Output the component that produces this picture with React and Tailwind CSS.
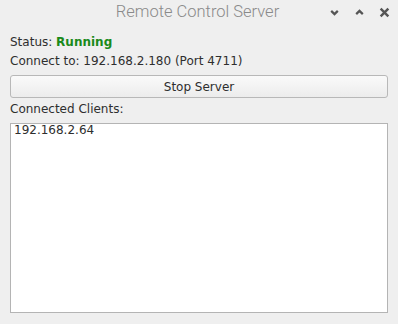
import React from "react";

export default function App() {
  return (
    <div className="w-[398px] h-[324px] bg-[#efefef] flex flex-col overflow-hidden">
      <div className="h-[26px] relative flex items-center justify-center shrink-0">
        <span className="text-[16.5px] font-light text-[#8a8a8a] font-['Roboto',sans-serif] leading-none mt-[-1px] ml-[-3px]">Remote Control Server</span>
        <div className="absolute right-[8px] top-[7px] flex items-center gap-[14px]">
          <svg width="11" height="11" viewBox="0 0 10 10"><path d="M2 3.5 L5 6.5 L8 3.5" stroke="#555" strokeWidth="2" fill="none" /></svg>
          <svg width="11" height="11" viewBox="0 0 10 10"><path d="M2 6.5 L5 3.5 L8 6.5" stroke="#555" strokeWidth="2" fill="none" /></svg>
          <svg width="11" height="11" viewBox="0 0 10 10"><path d="M1.5 1.5 L8.5 8.5 M8.5 1.5 L1.5 8.5" stroke="#555" strokeWidth="2.2" fill="none" /></svg>
        </div>
      </div>
      <div className="flex flex-col px-[10px] pt-[7px] font-['DejaVu_Sans',sans-serif] text-[12px] text-[#2e2e2e] leading-[19px]">
        <div>Status: <span className="font-bold text-[#1a8a1a]">Running</span></div>
        <div>Connect to: 192.168.2.180 (Port 4711)</div>
        <button className="mt-[4px] h-[23px] w-full rounded-[3px] border border-[#b8b8b8] bg-gradient-to-b from-[#fafafa] to-[#ececec] text-[12px] text-[#2e2e2e] font-['DejaVu_Sans',sans-serif] leading-none flex items-center justify-center">Stop Server</button>
        <div className="mt-[2px]">Connected Clients:</div>
        <div className="mt-[4px] h-[190px] bg-white border border-[#b4b4b4] px-[3px] pt-[0px]">
          <div className="leading-[13px]">192.168.2.64</div>
        </div>
      </div>
    </div>
  );
}
